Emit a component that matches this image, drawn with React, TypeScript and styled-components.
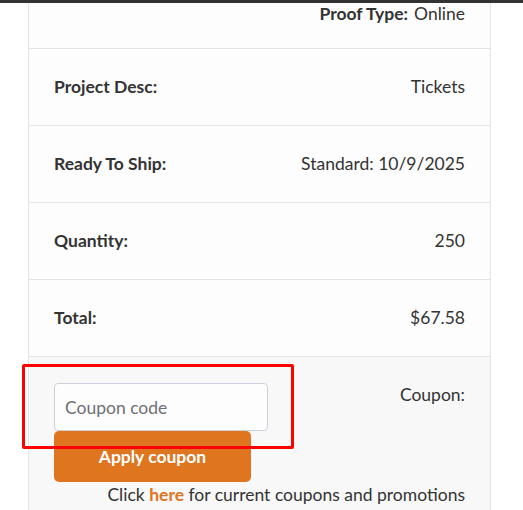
import React from "react";
import styled, { createGlobalStyle } from "styled-components";

const GlobalStyle = createGlobalStyle`
  html, body {
    margin: 0;
    padding: 0;
    background: #ffffff;
    font-family: Lato, "Open Sans", sans-serif;
    color: #333333;
  }
`;

const Page = styled.div`
  position: relative;
  display: flex;
  flex-direction: column;
  width: 523px;
  height: 510px;
  overflow: hidden;
  background: #ffffff;
`;

const TopBar = styled.div`
  flex: none;
  height: 3px;
  background: #333333;
`;

const Viewport = styled.div`
  flex: 1;
  overflow: hidden;
`;

const Panel = styled.div`
  margin-left: 28px;
  width: 461px;
  border-left: 1px solid #e4e4e4;
  border-right: 1px solid #e4e4e4;
  background: #fdfdfd;
`;

const Row = styled.div`
  box-sizing: border-box;
  display: flex;
  align-items: center;
  justify-content: space-between;
  height: 77px;
  padding: 0 25px 2px;
  border-bottom: 1px solid #e4e4e4;
  font-size: 17.5px;
`;

const ClippedRow = styled(Row)`
  align-items: flex-start;
  justify-content: flex-end;
  gap: 6px;
  height: 46px;
  padding: 0 25px;
  line-height: 21px;
`;

const Label = styled.span`
  font-weight: 700;
  color: #333333;
`;

const Value = styled.span`
  color: #333333;
`;

const CouponRow = styled.div`
  display: flex;
  flex-direction: column;
  padding: 26px 25px 20px;
  background: #f8f8f8;
  font-size: 17.5px;
`;

const CouponTop = styled.div`
  display: flex;
  justify-content: space-between;
  align-items: flex-start;
`;

const CouponForm = styled.div`
  display: flex;
  flex-direction: column;
  align-items: flex-start;
`;

const CouponInput = styled.input`
  box-sizing: border-box;
  width: 214px;
  height: 48px;
  padding: 0 10px;
  border: 1px solid #cfcfdc;
  border-radius: 4px;
  background: #fdfdfd;
  font-family: Lato, sans-serif;
  font-size: 17.5px;
  color: #333333;
  outline: none;
  &::placeholder {
    color: #6f6f76;
  }
`;

const ApplyButton = styled.button`
  width: 197px;
  height: 51px;
  border: none;
  border-radius: 5px;
  background: #e07520;
  color: #ffffff;
  font-family: Lato, sans-serif;
  font-weight: 700;
  font-size: 17.5px;
  cursor: pointer;
`;

const CouponLabel = styled.span`
  margin-top: 1px;
  color: #333333;
`;

const PromoLine = styled.div`
  margin-top: 2px;
  text-align: right;
  color: #333333;
`;

const PromoLink = styled.a`
  color: #e07520;
  font-weight: 700;
  text-decoration: none;
`;

const Highlight = styled.div`
  position: absolute;
  left: 22px;
  top: 364px;
  width: 266px;
  height: 79px;
  border: 3px solid #ff0000;
  border-radius: 2px;
  pointer-events: none;
`;

const rows = [
  { label: "Project Desc:", value: "Tickets" },
  { label: "Ready To Ship:", value: "Standard: 10/9/2025" },
  { label: "Quantity:", value: "250" },
  { label: "Total:", value: "$67.58" },
];

const App = () => {
  return (
    <Page>
      <GlobalStyle />
      <TopBar />
      <Viewport>
        <Panel>
          <ClippedRow>
            <Label>Proof Type:</Label>
            <Value>Online</Value>
          </ClippedRow>
          {rows.map((r, i) => (
            <Row key={i}>
              <Label>{r.label}</Label>
              <Value>{r.value}</Value>
            </Row>
          ))}
          <CouponRow>
            <CouponTop>
              <CouponForm>
                <CouponInput placeholder="Coupon code" />
                <ApplyButton>Apply coupon</ApplyButton>
              </CouponForm>
              <CouponLabel>Coupon:</CouponLabel>
            </CouponTop>
            <PromoLine>
              Click <PromoLink href="#">here</PromoLink> for current coupons
              and promotions
            </PromoLine>
          </CouponRow>
        </Panel>
      </Viewport>
      <Highlight />
    </Page>
  );
};

export default App;
